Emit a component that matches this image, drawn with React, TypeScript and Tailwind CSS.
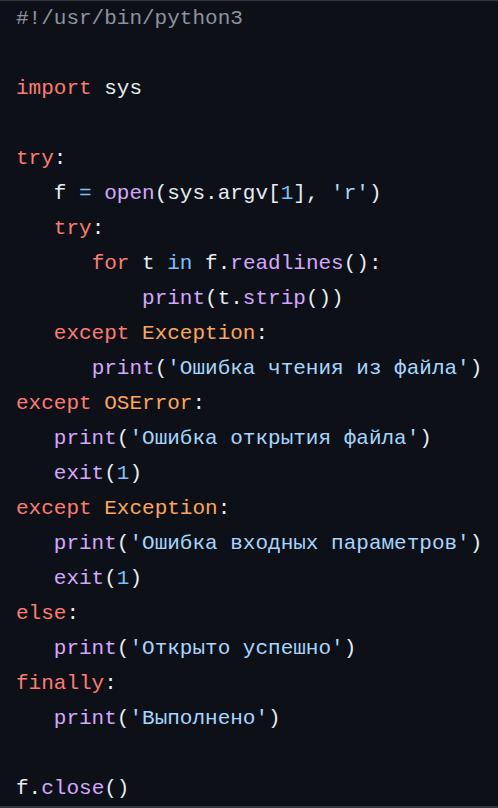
import React from "react";

type Tok = [string, string];

const K = "text-[#ff7b72]";
const F = "text-[#d2a8ff]";
const S = "text-[#a5d6ff]";
const C = "text-[#79c0ff]";
const O = "text-[#ffa657]";
const D = "text-[#e6edf3]";
const G = "text-[#8b949e]";

const lines: Tok[][] = [
  [["#!/usr/bin/python3", G]],
  [],
  [["import", K], [" sys", D]],
  [],
  [["try", K], [":", D]],
  [["   f ", D], ["=", C], [" ", D], ["open", F], ["(sys.argv[", D], ["1", C], ["], ", D], ["'r'", S], [")", D]],
  [["   ", D], ["try", K], [":", D]],
  [["      ", D], ["for", K], [" t ", D], ["in", C], [" f.", D], ["readlines", F], ["():", D]],
  [["          ", D], ["print", F], ["(t.", D], ["strip", F], ["())", D]],
  [["   ", D], ["except", K], [" ", D], ["Exception", O], [":", D]],
  [["      ", D], ["print", F], ["(", D], ["'Ошибка чтения из файла'", S], [")", D]],
  [["except", K], [" ", D], ["OSError", O], [":", D]],
  [["   ", D], ["print", F], ["(", D], ["'Ошибка открытия файла'", S], [")", D]],
  [["   ", D], ["exit", F], ["(", D], ["1", C], [")", D]],
  [["except", K], [" ", D], ["Exception", O], [":", D]],
  [["   ", D], ["print", F], ["(", D], ["'Ошибка входных параметров'", S], [")", D]],
  [["   ", D], ["exit", F], ["(", D], ["1", C], [")", D]],
  [["else", K], [":", D]],
  [["   ", D], ["print", F], ["(", D], ["'Открыто успешно'", S], [")", D]],
  [["finally", K], [":", D]],
  [["   ", D], ["print", F], ["(", D], ["'Выполнено'", S], [")", D]],
  [],
  [["f.", D], ["close", F], ["()", D]],
];

export default function App() {
  return (
    <div className="w-[498px] h-[808px] overflow-hidden bg-[#0d1117] border-t border-t-[#30363d] border-b-2 border-b-[#30363d]">
      <pre
        className="m-0 px-4 text-[21px] leading-[35px] whitespace-pre"
        style={{ fontFamily: '"Liberation Mono", "DejaVu Sans Mono", monospace' }}
      >
        {lines.map((l, i) => (
          <div key={i} className="h-[35px]">
            {l.map(([t, c], j) => (
              <span key={j} className={c}>
                {t}
              </span>
            ))}
          </div>
        ))}
      </pre>
    </div>
  );
}
